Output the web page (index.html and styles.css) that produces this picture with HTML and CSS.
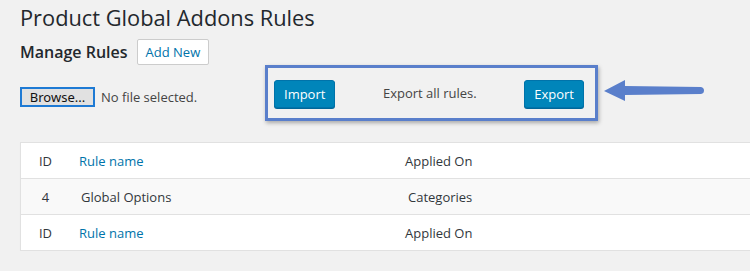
FILE: index.html
```html
<!DOCTYPE html>
<html lang="en">
<head>
    <meta charset="UTF-8">
    <meta name="viewport" content="width=device-width, initial-scale=1.0">
    <title>Product Global Addons Rules</title>
    <link rel="stylesheet" href="styles.css">
</head>
<body>
    <div class="wrap">
        <h1 class="page-title">Product Global Addons Rules</h1>

        <div class="manage-row">
            <h2 class="manage-title">Manage Rules</h2>
            <a class="button" href="#">Add New</a>
        </div>

        <div class="tools-row">
            <div class="file-picker">
                <span class="browse-btn">Browse...</span>
                <span class="file-name">No file selected.</span>
            </div>

            <div class="highlight-box">
                <button class="button-primary" type="button">Import</button>
                <span class="export-note">Export all rules.</span>
                <button class="button-primary" type="button">Export</button>
            </div>

            <svg class="arrow" width="102" height="24" viewBox="0 0 102 24">
                <path d="M0 11 L21 0 L21 6 L97 7 Q100 7.5 100 10.5 Q100 13.5 97 14 L21 15 L21 21 Z" fill="#5a7fcb"/>
            </svg>
        </div>

        <table class="rules-table">
            <thead>
                <tr>
                    <th class="col-id">ID</th>
                    <th class="col-name"><a href="#">Rule name</a></th>
                    <th class="col-applied">Applied On</th>
                </tr>
            </thead>
            <tbody>
                <tr>
                    <td class="col-id">4</td>
                    <td class="col-name">Global Options</td>
                    <td class="col-applied">Categories</td>
                </tr>
            </tbody>
            <tfoot>
                <tr>
                    <th class="col-id">ID</th>
                    <th class="col-name"><a href="#">Rule name</a></th>
                    <th class="col-applied">Applied On</th>
                </tr>
            </tfoot>
        </table>
    </div>
</body>
</html>
```

FILE: styles.css
```css
body {
    margin: 0;
    padding: 0;
    background-color: #f1f1f1;
    font-family: 'Open Sans', 'Noto Sans', sans-serif;
    color: #32373c;
    overflow: hidden;
}

.wrap {
    padding-left: 20px;
}

.page-title {
    margin: 0;
    padding-top: 3px;
    font-size: 21.8px;
    font-weight: 400;
    line-height: 30px;
    color: #23282d;
}

.manage-row {
    display: flex;
    align-items: center;
    gap: 9px;
    margin-top: 6px;
}

.manage-title {
    margin: 0;
    font-size: 16px;
    font-weight: 600;
    color: #23282d;
}

.button {
    display: inline-block;
    padding: 0 8px;
    height: 24px;
    line-height: 24px;
    font-size: 13px;
    color: #0073aa;
    background-color: #fff;
    border: 1px solid #ccc;
    border-radius: 2px;
    text-decoration: none;
}

.tools-row {
    display: flex;
    align-items: flex-start;
}

.file-picker {
    display: flex;
    align-items: center;
    gap: 6px;
    margin-top: 22px;
    width: 245px;
}

.browse-btn {
    display: inline-block;
    width: 71px;
    height: 16px;
    line-height: 16px;
    border: 2px solid #1e7ad4;
    background-color: #e1e1e1;
    font-size: 13px;
    color: #111;
    text-align: center;
    font-family: 'Noto Sans', sans-serif;
}

.file-name {
    font-size: 13px;
    color: #444;
}

.highlight-box {
    display: flex;
    align-items: center;
    justify-content: space-between;
    box-sizing: border-box;
    width: 333px;
    height: 56px;
    padding: 0 11px 0 6px;
    border: 3px solid #5a7fcb;
    box-shadow: 1px 2px 4px rgba(0, 0, 0, 0.3);
}

.button-primary {
    height: 28px;
    padding: 0 9px;
    font-family: inherit;
    font-size: 13px;
    color: #fff;
    background-color: #0085ba;
    border: 1px solid #0073aa;
    border-radius: 3px;
    box-shadow: 0 1px 0 #006799;
    margin-top: 2px;
}

.export-note {
    font-size: 13px;
    color: #444;
}

.arrow {
    margin-top: 15px;
    margin-left: 6px;
}

.rules-table {
    width: 800px;
    margin-top: 21px;
    border-collapse: collapse;
    background-color: #fff;
    border: 1px solid #e1e1e1;
    box-shadow: 0 1px 1px rgba(0, 0, 0, 0.04);
    font-size: 13px;
}

.rules-table th,
.rules-table td {
    height: 35px;
    padding: 0;
    font-weight: 400;
    text-align: left;
}

.rules-table thead tr,
.rules-table tbody tr {
    border-bottom: 1px solid #e1e1e1;
}

.rules-table tbody tr {
    background-color: #f9f9f9;
}

.rules-table a {
    color: #0073aa;
    text-decoration: none;
}

.rules-table .col-id {
    width: 49px;
    text-align: center;
}

.rules-table .col-name {
    width: 317px;
    padding-left: 9px;
}

.rules-table td.col-name {
    padding-left: 11px;
}

.rules-table .col-applied {
    padding-left: 7px;
}

.rules-table td.col-applied {
    padding-left: 10px;
}
```
